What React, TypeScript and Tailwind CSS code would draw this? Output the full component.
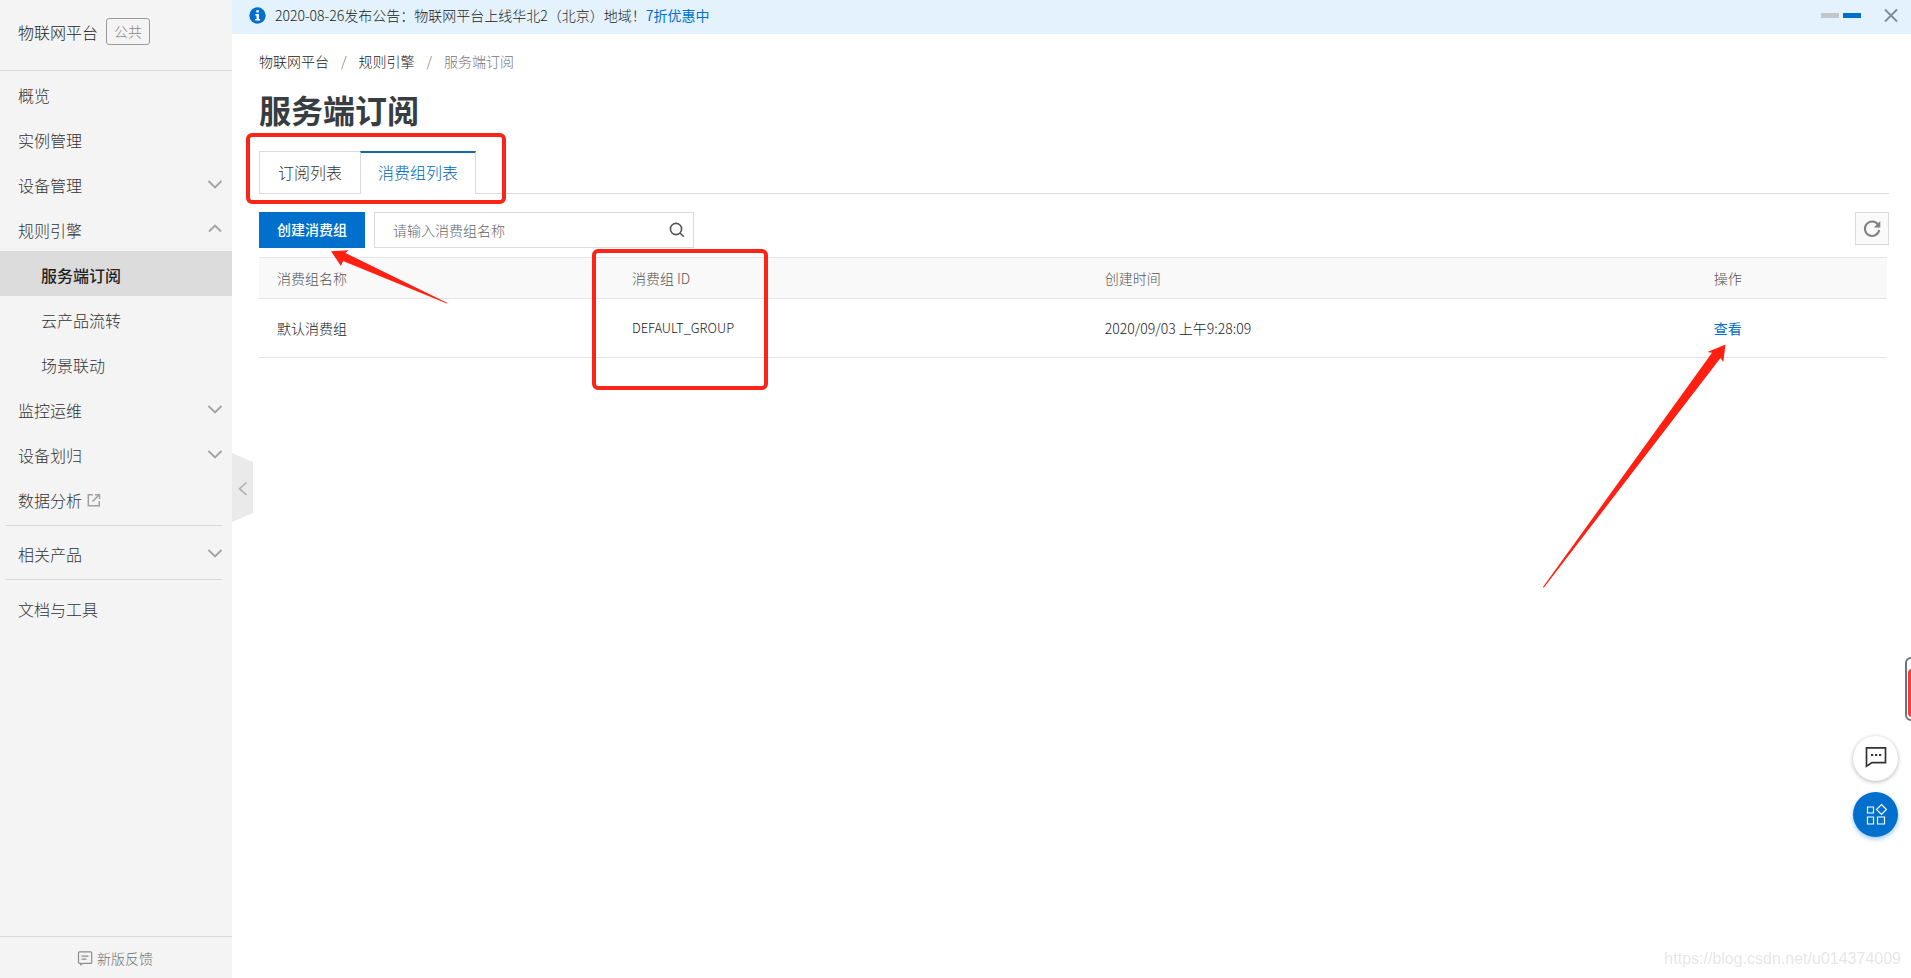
import React from "react";

type NavItem = { label: string; caret?: "up" | "down"; sub?: boolean; active?: boolean; external?: boolean };

const mainItems: NavItem[] = [
  { label: "概览" },
  { label: "实例管理" },
  { label: "设备管理", caret: "down" },
  { label: "规则引擎", caret: "up" },
  { label: "服务端订阅", sub: true, active: true },
  { label: "云产品流转", sub: true },
  { label: "场景联动", sub: true },
  { label: "监控运维", caret: "down" },
  { label: "设备划归", caret: "down" },
  { label: "数据分析", external: true },
];

function Caret({ up }: { up?: boolean }) {
  return (
    <svg className="h-4 w-4" viewBox="0 0 16 16" fill="none" stroke="#a3a3a3" strokeWidth="1.9" aria-hidden="true">
      <path d={up ? "M2 9.5 8 3.5 14 9.5" : "M1.5 4 8 10.5 14.5 4"} />
    </svg>
  );
}

function ExternalIcon() {
  return (
    <svg className="ml-1 h-4 w-4" viewBox="0 0 16 16" fill="none" stroke="#a0a0a0" strokeWidth="1.5" aria-hidden="true">
      <path d="M7 2.8H2.3v11h11V9" />
      <path d="M6.5 9.5 13 3M9 2.7h4.5V7" />
    </svg>
  );
}

function NavLink({ item }: { item: NavItem }) {
  return (
    <li>
      <a
        href="#"
        className={`flex h-[45px] items-center pt-[3px] pr-[9px] text-base ${item.sub ? "pl-[41px]" : "pl-[18px]"} ${
          item.active ? "bg-[#dcdcdc] font-medium text-[#222]" : "text-[#333]"
        }`}
      >
        <span>{item.label}</span>
        {item.external && <ExternalIcon />}
        {item.caret && (
          <span className="ml-auto">
            <Caret up={item.caret === "up"} />
          </span>
        )}
      </a>
    </li>
  );
}

function Sidebar() {
  return (
    <aside className="relative flex w-[232px] shrink-0 flex-col bg-[#f4f4f4]">
      <div className="flex h-[71px] items-start border-b border-[#d9d9d9] pt-[18px] pl-[18px]">
        <span className="text-base leading-7 text-[#222]">物联网平台</span>
        <span className="ml-2 rounded-[3px] border border-[#9a9a9a] px-[7px] text-sm leading-[25px] text-[#888]">
          公共
        </span>
      </div>
      <nav>
        <ul>
          {mainItems.map((item) => (
            <NavLink key={item.label} item={item} />
          ))}
        </ul>
        <ul className="mt-1 mr-2.5 ml-[5px] border-y border-[#d9d9d9] pt-1 pb-1">
          <li className="-mr-2.5 -ml-[5px]">
            <ul>
              <NavLink item={{ label: "相关产品", caret: "down" }} />
            </ul>
          </li>
        </ul>
        <ul className="mt-[5px]">
          <NavLink item={{ label: "文档与工具" }} />
        </ul>
      </nav>
      <a
        href="#"
        className="mt-auto flex h-[42px] items-center justify-center gap-1 border-t border-[#d9d9d9] pr-0.5 text-sm text-[#707070]"
      >
        <svg className="h-4 w-4" viewBox="0 0 16 16" fill="none" stroke="#8c8c8c" strokeWidth="1.2" aria-hidden="true">
          <path d="M2.5 1.8h11.2a1 1 0 0 1 1 1v9.6a1 1 0 0 1-1 1H6l-2.3 1.4v-1.4H2.5a1 1 0 0 1-1-1V2.8a1 1 0 0 1 1-1Z" />
          <path d="M4.5 6.2h7M4.5 9.2h5" />
        </svg>
        新版反馈
      </a>
      <button aria-label="收起导航" className="absolute top-[453px] left-full h-[70px] w-[21px]">
        <svg className="h-full w-full" viewBox="0 0 21 70" fill="none" aria-hidden="true">
          <path d="M0 0 21 9v51L0 69Z" fill="#eaeaea" />
          <path d="M14.5 29.5 7.5 35.7l7 6.3" stroke="#b0b0b0" strokeWidth="1.6" />
        </svg>
      </button>
    </aside>
  );
}

function Banner() {
  return (
    <div className="flex h-[34px] items-center bg-[#e3f2fd] pr-3 pb-1 pl-[17px] text-sm">
      <svg className="mr-[9px] h-[17px] w-[17px]" viewBox="0 0 17 17" aria-hidden="true">
        <circle cx="8.5" cy="8.5" r="8.2" fill="#0070cc" />
        <path d="M7.3 3.2h2.6v2.3H7.3zM6.3 6.9h3.6v5.2h1.2v1.5H6.2v-1.5h1.3V8.4H6.3z" fill="#fff" />
      </svg>
      <span className="text-[#222]">
        2020-08-26发布公告：物联网平台上线华北2（北京）地域！
        <a href="#" className="font-normal text-[#0070cc]">
          7折优惠中
        </a>
      </span>
      <span className="ml-auto flex gap-1">
        <button aria-label="第1条" className="h-[5px] w-[18px] bg-[#c1c7cc]" />
        <button aria-label="第2条" className="h-[5px] w-[18px] bg-[#0070cc]" />
      </span>
      <button aria-label="关闭" className="ml-[22px]">
        <svg className="h-4 w-4" viewBox="0 0 16 16" fill="none" stroke="#7f8a93" strokeWidth="1.8" aria-hidden="true">
          <path d="M2 2.5l12 12M14 2.5 2 14.5" />
        </svg>
      </button>
    </div>
  );
}

function GroupTable() {
  return (
    <div className="mt-[9px] pr-0.5">
      <table className="w-full table-fixed border-collapse text-left text-sm">
        <colgroup>
          <col className="w-[21.8%]" />
          <col className="w-[29.05%]" />
          <col className="w-[37.4%]" />
          <col />
        </colgroup>
        <thead>
          <tr className="h-[41px] border-y border-[#e3e4e6] bg-[#f9f9f9] text-[#555]">
            <th className="px-[18px] font-light">消费组名称</th>
            <th className="px-[18px] font-light">消费组 ID</th>
            <th className="px-[18px] font-light">创建时间</th>
            <th className="px-[18px] font-light">操作</th>
          </tr>
        </thead>
        <tbody>
          <tr className="h-[59px] border-b border-[#e3e4e6] text-[#222]">
            <td className="px-[18px]">默认消费组</td>
            <td className="relative px-[18px] text-[13px]">
              DEFAULT_GROUP
              <span className="pointer-events-none absolute -top-[50px] -left-[22px] h-[141px] w-[176px] rounded-md border-4 border-[#fb2418]" />
            </td>
            <td className="px-[18px]">2020/09/03 上午9:28:09</td>
            <td className="relative px-[18px]">
              <a href="#" className="font-normal text-[#0070cc]">
                查看
              </a>
              <svg
                className="pointer-events-none absolute top-[45px] -left-[154px] h-[244px] w-[184px]"
                viewBox="0 0 184 244"
                fill="#ff2012"
                aria-hidden="true"
              >
                <path d="M183.5.5 165.5 8l4.5.8L1 243l.8.8L178.5 14l2.8 4Z" />
              </svg>
            </td>
          </tr>
        </tbody>
      </table>
    </div>
  );
}

function FloatingTools() {
  return (
    <div className="fixed top-[736px] right-[13px] flex flex-col gap-[11px]">
      <button
        aria-label="消息"
        className="flex h-[45px] w-[45px] items-center justify-center rounded-full bg-white pb-[3px] shadow-[0_1px_4px_rgba(0,0,0,0.3)]"
      >
        <svg className="h-[22px] w-[22px]" viewBox="0 0 22 22" fill="none" stroke="#333" strokeWidth="1.7" aria-hidden="true">
          <path d="M1.5 1.8h19v14.8H7l-5.5 3.6Z" />
          <path d="M6 9h2.2M10 9h2.2M14 9h2.2" strokeWidth="2.2" />
        </svg>
      </button>
      <button
        aria-label="应用"
        className="flex h-[45px] w-[45px] items-center justify-center rounded-full bg-[#0070cc] pb-0.5 shadow-[0_2px_5px_rgba(0,112,204,0.4)]"
      >
        <svg className="h-[22px] w-[22px]" viewBox="0 0 22 22" fill="none" stroke="#fff" strokeWidth="1.2" aria-hidden="true">
          <path d="M2.5 4h6v6h-6zM2.5 14h6v7h-6zM12.5 14h7v7h-7zM16.5 1.5 21.5 6.5l-5 5-5-5Z" />
        </svg>
      </button>
    </div>
  );
}

export default function App() {
  return (
    <div className="flex min-h-screen bg-white font-['Noto_Sans_CJK_SC',sans-serif] font-light">
      <Sidebar />
      <main className="relative min-w-0 flex-1 overflow-hidden">
        <Banner />
        <div className="pt-[15px] pr-[22px] pl-[27px]">
          <nav aria-label="面包屑" className="flex gap-3 text-sm leading-6 text-[#222]">
            <a href="#">物联网平台</a>
            <span className="text-[#777]">/</span>
            <a href="#">规则引擎</a>
            <span className="text-[#777]">/</span>
            <span className="text-[#777]">服务端订阅</span>
          </nav>
          <h1 className="mt-4 text-[32px] leading-10 font-bold text-[#373d41]">服务端订阅</h1>
          <div className="relative mt-[22px] flex text-base">
            <button className="h-[43px] border border-r-0 border-[#d9dcde] px-[18px] pb-0.5 text-[#333]">订阅列表</button>
            <button className="h-[43px] border-x border-t-2 border-[#d9dcde] border-t-[#1468a8] px-[17px] pb-[3px] text-[#0064b8]">
              消费组列表
            </button>
            <span className="flex-1 border-b border-[#d9dcde]" />
            <span className="pointer-events-none absolute -top-[18px] -left-[13px] h-[71px] w-[260px] rounded-md border-4 border-[#fb2418]" />
          </div>
          <div className="relative mt-[18px] flex items-start">
            <button className="h-9 bg-[#0070cc] px-[18px] pb-0.5 text-sm font-medium text-white">创建消费组</button>
            <div className="ml-[9px] flex h-9 w-80 items-center border border-[#d9dcde] pr-2 pl-[18px]">
              <input
                aria-label="消费组名称"
                placeholder="请输入消费组名称"
                className="min-w-0 flex-1 text-sm outline-none placeholder:text-[#666]"
              />
              <svg className="h-4 w-4" viewBox="0 0 16 16" fill="none" stroke="#555" strokeWidth="1.6" aria-hidden="true">
                <circle cx="7" cy="7" r="5.6" />
                <path d="m11 11 3.8 3.8" />
              </svg>
            </div>
            <button
              aria-label="刷新"
              className="ml-auto flex h-[33px] w-[34px] items-center justify-center border border-[#d9dcde] bg-[#fafafa]"
            >
              <svg className="h-[18px] w-[18px]" viewBox="0 0 18 18" fill="none" stroke="#808080" strokeWidth="2" aria-hidden="true">
                <path d="M15 4.6A7.2 7.2 0 1 0 16.2 10" />
                <path d="M17.3 1v6.6h-6.4Z" fill="#808080" stroke="none" />
              </svg>
            </button>
            <svg
              className="pointer-events-none absolute top-[38px] left-[72px] z-10 h-[54px] w-[117px]"
              viewBox="0 0 117 54"
              fill="#ff2012"
              aria-hidden="true"
            >
              <path d="M0 1.2 17.5.2 14.5 3 116.5 53 115.8 53.6 12 11 10 16Z" />
            </svg>
          </div>
          <GroupTable />
        </div>
      </main>
      <span className="fixed top-[657px] -right-4 h-16 w-[22px] rounded-md border-2 border-[#6e7379] bg-white px-px pt-2.5 pb-0.5">
        <span className="block h-full rounded-sm bg-[#f53b3b]" />
      </span>
      <FloatingTools />
      <span className="fixed right-2.5 bottom-[7px] font-['Liberation_Sans',sans-serif] text-base leading-6 font-normal text-[#e6e6e6]">
        https://blog.csdn.net/u014374009
      </span>
    </div>
  );
}
